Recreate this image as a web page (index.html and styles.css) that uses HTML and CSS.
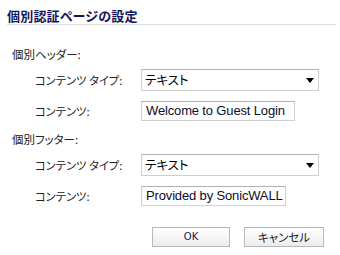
FILE: index.html
```html
<!DOCTYPE html>
<html lang="ja">
<head>
<meta charset="utf-8">
<link rel="stylesheet" href="styles.css">
</head>
<body>
<div class="dialog">
  <h1 class="title">個別認証ページの設定</h1>

  <div class="section">
    <div class="section-label">個別ヘッダー:</div>
    <div class="row">
      <span class="label">コンテンツ タイプ:</span>
      <div class="select select-wide"><span class="select-text">テキスト</span>
        <svg class="arrow" width="8" height="5" viewBox="0 0 8 5"><path d="M0 0H8L4 5Z" fill="#000"/></svg>
      </div>
    </div>
    <div class="row row-input">
      <span class="label">コンテンツ:</span>
      <div class="input input-1">Welcome to Guest Login</div>
    </div>
  </div>

  <div class="section">
    <div class="section-label">個別フッター:</div>
    <div class="row">
      <span class="label">コンテンツ タイプ:</span>
      <div class="select select-wide"><span class="select-text">テキスト</span>
        <svg class="arrow" width="8" height="5" viewBox="0 0 8 5"><path d="M0 0H8L4 5Z" fill="#000"/></svg>
      </div>
    </div>
    <div class="row row-input">
      <span class="label">コンテンツ:</span>
      <div class="input input-2">Provided by SonicWALL</div>
    </div>
  </div>

  <div class="buttons">
    <button class="btn btn-ok">OK</button>
    <button class="btn btn-cancel">キャンセル</button>
  </div>
</div>
</body>
</html>
```

FILE: styles.css
```css
html, body {
  margin: 0;
  padding: 0;
  background: #fff;
}
body {
  width: 340px;
  height: 255px;
  overflow: hidden;
  font-family: "Noto Sans CJK JP", "DejaVu Sans", sans-serif;
  color: #222;
}
.dialog {
  display: flex;
  flex-direction: column;
}
.title {
  margin: 0 4px 0 7px;
  padding-top: 7px;
  height: 17px;
  border-bottom: 1px solid #dcdcdc;
  font-size: 13px;
  line-height: 17px;
  font-weight: bold;
  color: #15155a;
  font-feature-settings: "palt";
  letter-spacing: 0.2px;
}
.section {
  display: flex;
  flex-direction: column;
}
.section-label {
  margin-top: 22px;
  margin-left: 12px;
  height: 14px;
  font-size: 11.5px;
  line-height: 14px;
  font-feature-settings: "palt";
}
.section + .section .section-label {
  margin-top: 11px;
}
.row {
  display: flex;
  align-items: center;
  margin-top: 8px;
  padding-left: 35px;
  height: 22px;
}
.row-input {
  margin-top: 10px;
  height: 20px;
}
.label {
  width: 106px;
  font-size: 11.3px;
  line-height: 14px;
  font-feature-settings: "palt";
  white-space: nowrap;
}
.select {
  box-sizing: border-box;
  height: 22px;
  display: flex;
  align-items: center;
  justify-content: space-between;
  padding: 0 4px 0 3px;
  border: 1px solid #cfcfcf;
  border-top-color: #b4b4b4;
  background: #fff;
}
.select-wide {
  width: 178px;
}
.select-text {
  font-size: 12.5px;
  line-height: 16px;
  color: #000;
  font-feature-settings: "palt";
}
.arrow {
  display: block;
}
.input {
  box-sizing: border-box;
  height: 20px;
  padding: 0 0 0 4px;
  border: 1px solid #d0d0d0;
  border-top-color: #b0b0b0;
  font-family: "Liberation Sans", Arial, sans-serif;
  font-size: 13px;
  line-height: 18px;
  letter-spacing: -0.15px;
  color: #0d0d28;
  white-space: nowrap;
  overflow: hidden;
}
.input-1 { width: 154px; }
.input-2 { width: 145px; }
.buttons {
  display: flex;
  justify-content: flex-end;
  gap: 14px;
  margin-top: 21px;
  margin-right: 16px;
}
.btn {
  box-sizing: border-box;
  height: 20px;
  padding: 0;
  border: 1px solid #b8b8b8;
  background: linear-gradient(#ffffff, #ececec);
  font-size: 11px;
  line-height: 18px;
  color: #222;
  font-family: "Noto Sans CJK JP", sans-serif;
}
.btn-ok {
  width: 78px;
  font-family: "DejaVu Sans", sans-serif;
  font-size: 10px;
  color: #1a1a55;
}
.btn-cancel {
  width: 80px;
  font-size: 11.5px;
  font-feature-settings: "palt";
}
```
